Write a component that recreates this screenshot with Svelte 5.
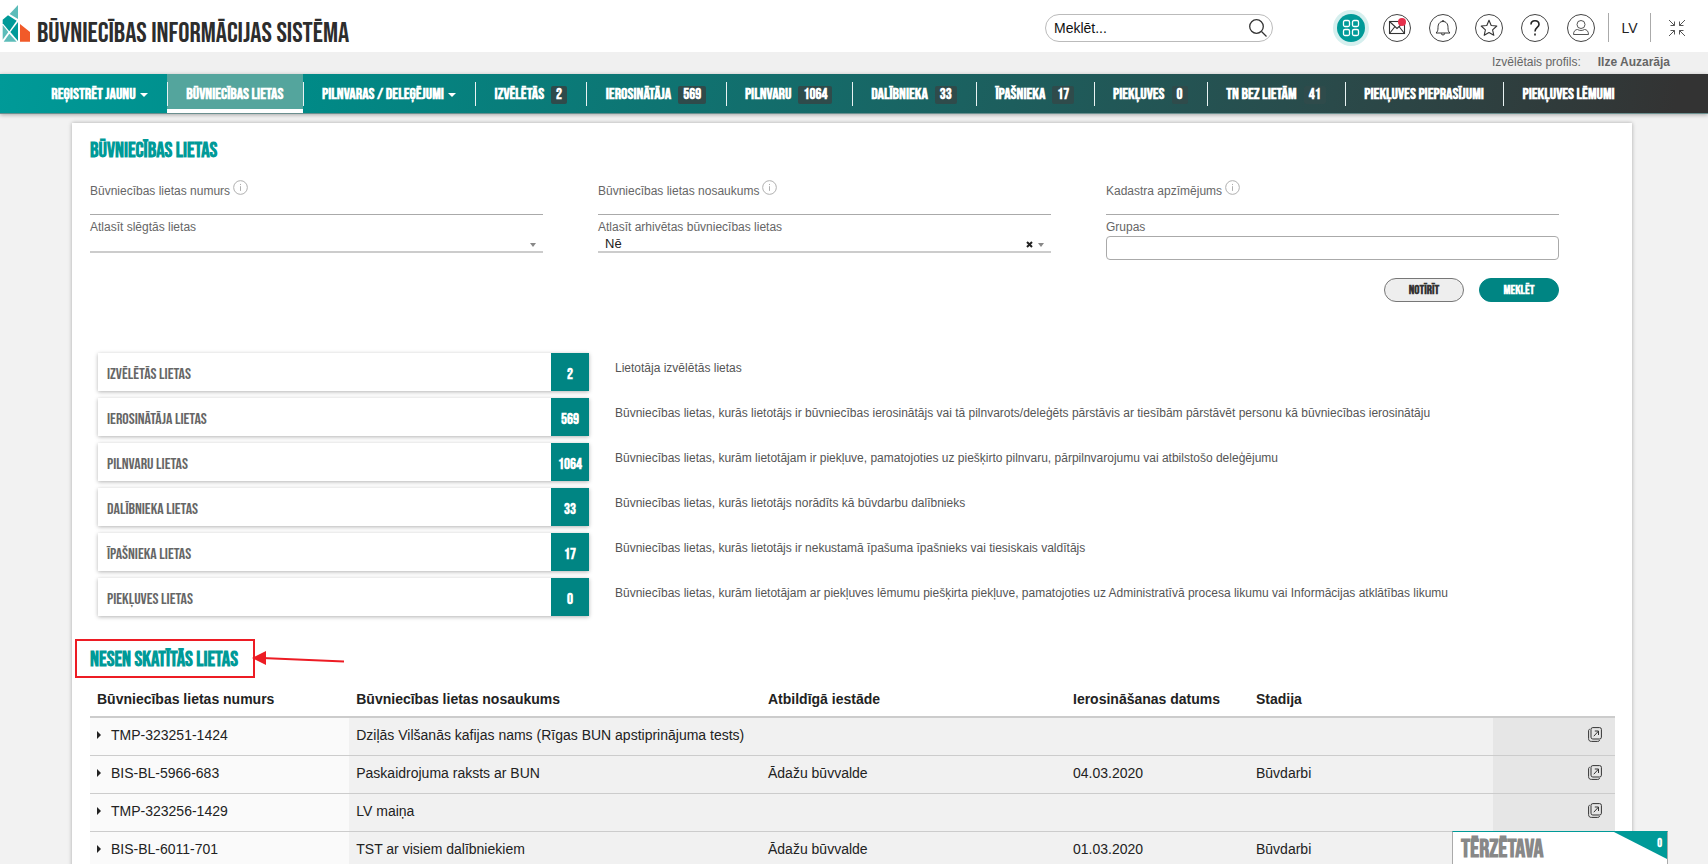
<script lang="ts">
  type NavItem = { label: string; count?: number; menu?: boolean; active?: boolean };

  const navItems: NavItem[] = [
    { label: 'Reģistrēt jaunu', menu: true },
    { label: 'Būvniecības lietas', active: true },
    { label: 'Pilnvaras / Deleģējumi', menu: true },
    { label: 'Izvēlētās', count: 2 },
    { label: 'Ierosinātāja', count: 569 },
    { label: 'Pilnvaru', count: 1064 },
    { label: 'Dalībnieka', count: 33 },
    { label: 'Īpašnieka', count: 17 },
    { label: 'Piekļuves', count: 0 },
    { label: 'TN bez lietām', count: 41 },
    { label: 'Piekļuves pieprasījumi' },
    { label: 'Piekļuves lēmumi' }
  ];

  const groups = [
    { label: 'Izvēlētās lietas', count: 2, text: 'Lietotāja izvēlētās lietas' },
    { label: 'Ierosinātāja lietas', count: 569, text: 'Būvniecības lietas, kurās lietotājs ir būvniecības ierosinātājs vai tā pilnvarots/deleģēts pārstāvis ar tiesībām pārstāvēt personu kā būvniecības ierosinātāju' },
    { label: 'Pilnvaru lietas', count: 1064, text: 'Būvniecības lietas, kurām lietotājam ir piekļuve, pamatojoties uz piešķirto pilnvaru, pārpilnvarojumu vai atbilstošo deleģējumu' },
    { label: 'Dalībnieka lietas', count: 33, text: 'Būvniecības lietas, kurās lietotājs norādīts kā būvdarbu dalībnieks' },
    { label: 'Īpašnieka lietas', count: 17, text: 'Būvniecības lietas, kurās lietotājs ir nekustamā īpašuma īpašnieks vai tiesiskais valdītājs' },
    { label: 'Piekļuves lietas', count: 0, text: 'Būvniecības lietas, kurām lietotājam ar piekļuves lēmumu piešķirta piekļuve, pamatojoties uz Administratīvā procesa likumu vai Informācijas atklātības likumu' }
  ];

  const cases = [
    { number: 'TMP-323251-1424', name: 'Dziļās Vilšanās kafijas nams (Rīgas BUN apstiprinājuma tests)', office: '', date: '', stage: '' },
    { number: 'BIS-BL-5966-683', name: 'Paskaidrojuma raksts ar BUN', office: 'Ādažu būvvalde', date: '04.03.2020', stage: 'Būvdarbi' },
    { number: 'TMP-323256-1429', name: 'LV maiņa', office: '', date: '', stage: '' },
    { number: 'BIS-BL-6011-701', name: 'TST ar visiem dalībniekiem', office: 'Ādažu būvvalde', date: '01.03.2020', stage: 'Būvdarbi' }
  ];

  let closed = $state('');
  let archived = $state('no');
  let number = $state('');
  let name = $state('');
  let cadastre = $state('');
  let group = $state('');

  function clearForm() {
    number = name = cadastre = group = closed = archived = '';
  }
</script>

{#snippet info()}
  <svg class="info" viewBox="0 0 16 16" width="15" height="15" fill="none" stroke="#aaa"><circle cx="8" cy="8" r="7.3" /><path d="M8 6.6v5M8 4.2v1.2" /></svg>
{/snippet}

<div class="page">
  <header class="top">
    <a class="brand" href="#home">
      <svg width="30" height="44" viewBox="0 0 90 132">
        <path d="M54 15v42L29 42z" fill="#5cbcb9" />
        <path d="M24 46l26 16-22 32L8 70V59z" fill="#009a98" />
        <path d="M54 66v57L31 96z" fill="#009a98" />
        <path d="M8 75l17 21L8 119z" fill="#5cbcb9" />
        <path d="M28 101l22 24H11z" fill="#5cbcb9" />
        <path d="M60 72l30 24v29H60z" fill="#f15a29" />
      </svg>
      <span>Būvniecības informācijas sistēma</span>
    </a>

    <div class="tools">
      <form class="search" onsubmit={(e) => e.preventDefault()}>
        <input type="text" placeholder="Meklēt..." aria-label="Meklēt" />
        <button aria-label="Meklēt">
          <svg width="20" height="24" viewBox="0 0 20 24" fill="none" stroke="#333" stroke-width="1.3"><circle cx="8.500" cy="10.500" r="6.800" /><path d="M13.500 15.500l5 5" /></svg>
        </button>
      </form>

      <div class="icons">
        <button class="round apps" aria-label="Lietotnes">
          <svg width="18" height="18" viewBox="0 0 18 18" fill="none" stroke="#fff" stroke-width="1.3"><rect x="1.5" y="1.5" width="6" height="6" rx="1.5" /><rect x="10.5" y="1.5" width="6" height="6" rx="1.5" /><rect x="1.5" y="10.5" width="6" height="6" rx="1.5" /><rect x="10.5" y="10.5" width="6" height="6" rx="1.5" /></svg>
        </button>
        <button class="round mail" aria-label="Ziņojumi">
          <svg width="18" height="16" viewBox="0 0 18 16" fill="none" stroke="#333" stroke-width="1.1"><rect x="1.5" y="1.500" width="15" height="12" /><path d="M1.500 1.500L9 8.500l7.500-7M1.500 13.500l5.500-7M16.500 13.500L11 6.500" /></svg>
          <i class="dot"></i>
        </button>
        <button class="round" aria-label="Paziņojumi">
          <svg width="18" height="18" viewBox="0 0 18 18" fill="none" stroke="#333"><path d="M2 14h14c-1.700-1.300-2-3-2-5.500 0-3.500-1.700-6-5-6s-5 2.500-5 6c0 2.500-.3 4.200-2 5.500zM7.300 14.300a1.700 1.700 0 0 0 3.400 0M8 2.500a1 1 0 1 1 2 0" /></svg>
        </button>
        <button class="round" aria-label="Izlase">
          <svg width="18" height="18" viewBox="0 0 18 18" fill="none" stroke="#333" stroke-width="1.1" stroke-linejoin="round"><path d="M9 1.200l2.200 5.300 5.600.5-4.200 3.800 1.200 5.500L9 13.500l-4.800 2.800 1.200-5.500L1.200 7l5.600-.5z" /></svg>
        </button>
        <button class="round" aria-label="Palīdzība">
          <svg width="18" height="20" viewBox="0 0 18 20" fill="none" stroke="#222" stroke-width="1.600"><path d="M5 6.500c0-5 8-5 8 0 0 3-4 3-4 7M9 15.500v2" /></svg>
        </button>
        <button class="round" aria-label="Lietotājs">
          <svg width="18" height="18" viewBox="0 0 18 18" fill="none" stroke="#555"><circle cx="9" cy="5.500" r="4" /><path d="M1.500 15.500c0-3.500 2-5 4-5 2 1.300 5 1.300 7 0 2 0 4 1.500 4 5z" /></svg>
        </button>
      </div>

      <button class="lang">LV</button>
      <button class="shrink" aria-label="Samazināt">
        <svg width="18" height="18" viewBox="0 0 18 18" fill="none" stroke="#555"><path d="M1 1l5.500 5.500M6.500 2.500v4h-4M17 1l-5.500 5.500M11.500 2.500v4h4M1 17l5.500-5.500M2.500 11.500h4v4M17 17l-5.500-5.500M15.500 11.500h-4v4" /></svg>
      </button>
    </div>
  </header>

  <div class="profile">
    <span>Izvēlētais profils:</span>
    <strong>Ilze Auzarāja</strong>
  </div>

  <nav>
    {#each navItems as item}
      <a href="#{item.label}" class:active={item.active}>
        <span>{item.label}</span>
        {#if item.menu}<i class="caret"></i>{/if}
        {#if item.count !== undefined}<b>{item.count}</b>{/if}
      </a>
    {/each}
  </nav>

  <main>
    <h1>Būvniecības lietas</h1>

    <form class="filter" onsubmit={(e) => e.preventDefault()}>
      <div class="fields">
        <div class="field">
          <label for="number">Būvniecības lietas numurs {@render info()}</label>
          <input id="number" type="text" bind:value={number} />
        </div>
        <div class="field">
          <label for="name">Būvniecības lietas nosaukums {@render info()}</label>
          <input id="name" type="text" bind:value={name} />
        </div>
        <div class="field">
          <label for="cadastre">Kadastra apzīmējums {@render info()}</label>
          <input id="cadastre" type="text" bind:value={cadastre} />
        </div>
        <div class="field">
          <label for="closed">Atlasīt slēgtās lietas</label>
          <div class="pick">
            <select id="closed" bind:value={closed}>
              <option value=""></option>
              <option value="yes">Jā</option>
              <option value="no">Nē</option>
            </select>
            <i class="arrow"></i>
          </div>
        </div>
        <div class="field">
          <label for="archived">Atlasīt arhivētas būvniecības lietas</label>
          <div class="pick">
            <select id="archived" bind:value={archived}>
              <option value=""></option>
              <option value="yes">Jā</option>
              <option value="no">Nē</option>
            </select>
            {#if archived}
              <button type="button" class="clear" aria-label="Notīrīt izvēli" onclick={() => (archived = '')}>
                <svg width="7" height="7" viewBox="0 0 7 7" stroke="#222" stroke-width="2"><path d="M1 1l5 5M6 1L1 6" /></svg>
              </button>
            {/if}
            <i class="arrow"></i>
          </div>
        </div>
        <div class="field">
          <label for="group">Grupas</label>
          <input id="group" class="boxed" type="text" bind:value={group} />
        </div>
      </div>
      <div class="actions">
        <button type="button" onclick={clearForm}>Notīrīt</button>
        <button class="primary">Meklēt</button>
      </div>
    </form>

    <ul class="groups">
      {#each groups as g}
        <li>
          <a href="#{g.label}"><span>{g.label}</span><b>{g.count}</b></a>
          <p>{g.text}</p>
        </li>
      {/each}
    </ul>

    <div class="recent">
      <h2>Nesen skatītās lietas</h2>
      <div class="mark"></div>
      <svg class="pointer" width="94" height="16" viewBox="0 0 94 16"><path d="M10 7l82 3.500" stroke="#ed1c24" stroke-width="2" /><path d="M0 7L14 0v14z" fill="#ed1c24" /></svg>
    </div>

    <table>
      <colgroup>
        <col class="w17" /><col class="w27" /><col class="w20" /><col class="w12" /><col class="w16" /><col />
      </colgroup>
      <thead>
        <tr>
          <th>Būvniecības lietas numurs</th>
          <th>Būvniecības lietas nosaukums</th>
          <th>Atbildīgā iestāde</th>
          <th>Ierosināšanas datums</th>
          <th>Stadija</th>
          <th></th>
        </tr>
      </thead>
      <tbody>
        {#each cases as row}
          <tr>
            <td>
              <div class="number">
                <button class="expand" aria-label="Izvērst"></button>
                <span>{row.number}</span>
              </div>
            </td>
            <td>{row.name}</td>
            <td>{row.office}</td>
            <td>{row.date}</td>
            <td>{row.stage}</td>
            <td>
              <a href="#{row.number}" aria-label="Atvērt {row.number}">
                <svg width="14" height="15" viewBox="0 0 14 15" fill="none" stroke="#333"><rect x="3" y=".6" width="10.400" height="11.400" rx="1.800" /><path d="M1.800 2.200C.8 2.500.6 3 .6 4v7.500c0 2 .9 2.900 2.900 2.900H9.500c1.200 0 1.900-.4 2.200-1.200M5.800 9.200l4.600-5M6.800 4h3.700v4" /></svg>
              </a>
            </td>
          </tr>
        {/each}
      </tbody>
    </table>
  </main>

  <button class="chat">
    <span>Tērzētava</span>
    <b>0</b>
  </button>
</div>

<style>
  :global(body) {
    margin: 0;
    background: #f2f2f2;
  }

  .page {
    --teal: #009a98;
    --narrow: 'Bebas Neue', 'Liberation Sans Narrow', 'Liberation Sans', sans-serif;
    position: relative;
    display: flex;
    flex-direction: column;
    height: 100vh;
    overflow: hidden;
    box-sizing: border-box;
    background: #f2f2f2;
    color: #222;
    font-family: 'Liberation Sans', Arial, sans-serif;
    font-size: 14px;
  }

  button, input, select {
    font: inherit;
    color: inherit;
    margin: 0;
    padding: 0;
    border: 0;
    background: none;
  }

  a {
    color: inherit;
    text-decoration: none;
  }

  svg {
    display: block;
  }

  .top {
    display: flex;
    flex: none;
    justify-content: space-between;
    height: 52px;
    padding-right: 22px;
    background: #fff;
  }

  .brand {
    display: flex;
    gap: 7px;
    color: #2d2d2d;
    font: 28px/67px var(--narrow);
    text-transform: uppercase;
    white-space: nowrap;
  }

  .tools {
    display: flex;
    align-items: center;
    height: 55px;
  }

  .search {
    display: flex;
    align-items: center;
    box-sizing: border-box;
    width: 228px;
    height: 28px;
    padding: 0 4px 0 8px;
    border: 1px solid #bbb;
    border-radius: 14px;
  }

  .search input {
    flex: 1;
    min-width: 0;
    outline: none;
  }

  .search input::placeholder {
    color: #111;
    opacity: 1;
  }

  .icons {
    display: flex;
    gap: 18px;
    margin: 0 13px 0 64px;
  }

  .round {
    position: relative;
    display: flex;
    align-items: center;
    justify-content: center;
    box-sizing: border-box;
    width: 28px;
    height: 28px;
    border: 1px solid #444;
    border-radius: 50%;
  }

  .apps {
    border: 0;
    background: var(--teal);
    box-shadow: 0 0 0 4px #d5efee;
  }

  .dot {
    position: absolute;
    top: 3px;
    right: 4px;
    width: 8px;
    height: 8px;
    border-radius: 50%;
    background: #e5304b;
  }

  .lang {
    width: 43px;
    height: 29px;
    border: solid #aaa;
    border-width: 0 1px;
  }

  .shrink {
    margin-left: 17px;
  }

  .profile {
    display: flex;
    flex: none;
    justify-content: flex-end;
    gap: 17px;
    height: 22px;
    padding-right: 38px;
    background: #f0f0f0;
    color: #666;
    font-size: 12px;
    line-height: 20px;
  }

  nav {
    display: flex;
    flex: none;
    height: 39px;
    padding: 0 74px 0 32px;
    border-bottom: 1px solid #6b8f8f;
    background: linear-gradient(100deg, #009a98, #008a87 18%, #2a4a4a 78%, #333 98%);
    box-shadow: 0 1px 4px rgba(0, 0, 0, 0.3);
    color: #fff;
    font: bold 16px/20px var(--narrow);
    text-transform: uppercase;
    white-space: nowrap;
  }

  nav a {
    position: relative;
    display: flex;
    flex: 1 0 auto;
    align-items: center;
    justify-content: center;
    padding-top: 2px;
  }

  nav a + a::before {
    content: '';
    position: absolute;
    left: 0;
    top: 8px;
    width: 1px;
    height: 24px;
    background: #e8f2f2;
  }

  nav .active {
    background: #54a59d;
    box-shadow: inset 0 -4px #fff;
  }

  .caret {
    margin-left: 4px;
    border: 4px solid transparent;
    border-top-color: #fff;
    border-bottom: 0;
  }

  nav b {
    margin-left: 7px;
    padding: 0 5px;
    border-radius: 2px;
    background: #2f4b4b;
    font-size: 15px;
    line-height: 18px;
  }

  main {
    flex: 1 0 auto;
    margin: 9px 76px 0 72px;
    padding: 0 17px 0 18px;
    background: #fff;
    box-shadow: 0 0 4px rgba(0, 0, 0, 0.3);
  }

  h1, h2 {
    margin: 0;
    color: var(--teal);
    font: bold 21px/24px var(--narrow);
    text-transform: uppercase;
  }

  h1 {
    padding-top: 16px;
  }

  .filter {
    padding: 20px 56px 0 0;
    color: #666;
    font-size: 12px;
  }

  .fields {
    display: grid;
    grid-template-columns: repeat(3, 1fr);
    gap: 4px 55px;
  }

  .field {
    display: flex;
    flex-direction: column;
  }

  .field label {
    display: flex;
    gap: 3px;
    height: 17px;
    line-height: 17px;
  }

  .info {
    margin-top: -3px;
  }

  .field input {
    height: 14px;
    border-bottom: 1px solid #aaa;
    outline: none;
  }

  .field .boxed {
    box-sizing: border-box;
    height: 24px;
    border: 1px solid #aaa;
    border-radius: 4px;
  }

  .pick {
    position: relative;
    display: flex;
    border-bottom: 2px solid #ccc;
  }

  .pick select {
    flex: 1;
    height: 15px;
    padding-left: 7px;
    appearance: none;
    outline: none;
    color: #222;
    font-size: 13px;
  }

  .arrow {
    position: absolute;
    right: 7px;
    top: 7px;
    border: 3px solid transparent;
    border-top: 4px solid #888;
    border-bottom: 0;
    pointer-events: none;
  }

  .clear {
    position: absolute;
    right: 18px;
    top: 5px;
  }

  .actions {
    display: flex;
    justify-content: flex-end;
    gap: 15px;
    padding-top: 18px;
  }

  .actions button {
    width: 80px;
    height: 24px;
    border: 1px solid #777;
    border-radius: 12px;
    background: #eee;
    color: #333;
    font: bold 13px/22px var(--narrow);
    text-transform: uppercase;
  }

  .actions .primary {
    border-color: #008583;
    background: #008583;
    color: #fff;
  }

  .groups {
    display: flex;
    flex-direction: column;
    gap: 7px;
    margin: 0;
    padding: 51px 8px 0 8px;
    list-style: none;
  }

  .groups li {
    display: flex;
    gap: 26px;
    color: #555;
  }

  .groups a {
    display: flex;
    flex: 0 0 491px;
    justify-content: space-between;
    height: 38px;
    box-shadow: 0 1px 4px rgba(0, 0, 0, 0.3);
    color: #666;
    font: 16px/38px var(--narrow);
    text-transform: uppercase;
  }

  .groups span,
  .groups b {
    box-sizing: border-box;
    padding-top: 3px;
  }

  .groups span {
    padding-left: 9px;
  }

  .groups b {
    width: 38px;
    background: #008583;
    color: #fff;
    font-size: 15px;
    text-align: center;
  }

  .groups p {
    margin: 0;
    font-size: 12px;
    line-height: 31px;
  }

  .recent {
    position: relative;
    padding: 32px 0 13px;
  }

  .mark {
    position: absolute;
    left: -15px;
    top: 23px;
    box-sizing: border-box;
    width: 180px;
    height: 39px;
    border: 2px solid #ed1c24;
  }

  .pointer {
    position: absolute;
    left: 162px;
    top: 35px;
  }

  table {
    width: 100%;
    border-collapse: collapse;
    table-layout: fixed;
  }

  .w17 { width: 17%; }
  .w27 { width: 27%; }
  .w20 { width: 20%; }
  .w12 { width: 12%; }
  .w16 { width: 16%; }

  th, td {
    box-sizing: border-box;
    height: 38px;
    padding: 0 7px 3px;
    text-align: left;
    white-space: nowrap;
  }

  th {
    height: 32px;
    border-bottom: 2px solid #ccc;
  }

  td {
    border-bottom: 1px solid #ccc;
    background: #f1f1f1;
  }

  td:first-child {
    background: #fafafa;
  }

  td:last-child {
    padding-right: 13px;
    background: #e6e6e6;
  }

  td svg {
    margin-left: auto;
  }

  .number {
    display: flex;
    align-items: center;
    gap: 10px;
  }

  .expand {
    width: 0;
    height: 0;
    border: 4px solid transparent;
    border-left: 4px solid #222;
    border-right: 0;
  }

  .chat {
    position: absolute;
    right: 40px;
    bottom: 0;
    display: flex;
    justify-content: space-between;
    box-sizing: border-box;
    width: 216px;
    height: 33px;
    padding-left: 8px;
    border: 1px solid #aaa;
    border-top-color: var(--teal);
    border-bottom: 0;
    background: #fff;
    color: #888;
    font: bold 25px/36px var(--narrow);
    text-transform: uppercase;
  }

  .chat b {
    box-sizing: border-box;
    width: 53px;
    height: 27px;
    padding-right: 5px;
    clip-path: polygon(0 0, 100% 0, 100% 100%);
    background: var(--teal);
    color: #fff;
    font-size: 12px;
    line-height: 24px;
    text-align: right;
  }
</style>
